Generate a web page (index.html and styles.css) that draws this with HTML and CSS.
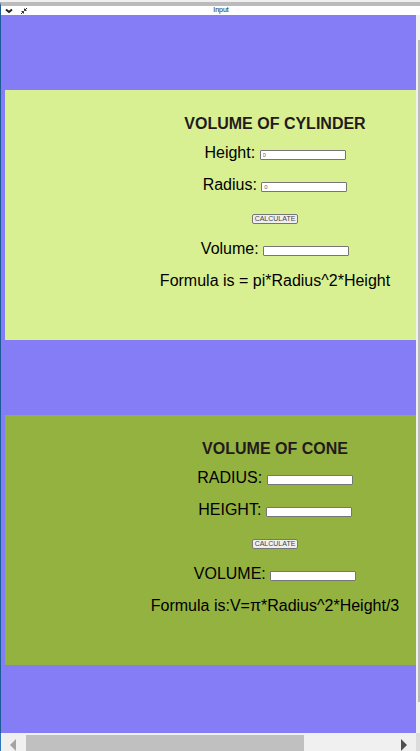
FILE: index.html
```html
<!DOCTYPE html>
<html lang="en">
<head>
<meta charset="utf-8">
<title>Input</title>
<link rel="stylesheet" href="styles.css">
</head>
<body>
<header class="titlebar">
  <svg class="icon" viewBox="0 0 8 8" aria-hidden="true"><path d="M1 2.5 L4 5 L7 2.5" fill="none" stroke="#222" stroke-width="2"/></svg>
  <svg class="icon" viewBox="0 0 8 8" aria-hidden="true"><path d="M1 7 L3.5 4.5 M4.5 3.5 L7 1 M1.5 4.5 H3.5 V6.5 M4.5 1.5 V3.5 H6.5" fill="none" stroke="#333" stroke-width="1"/></svg>
  <span class="name">Input</span>
</header>
<div class="view">
  <main class="stage">
    <form class="card cylinder">
      <h1>VOLUME OF CYLINDER</h1>
      <div class="row"><label for="cyl-height">Height:</label> <input id="cyl-height" type="text" value="0"></div>
      <div class="row"><label for="cyl-radius">Radius:</label> <input id="cyl-radius" type="text" value="0"></div>
      <div class="row"><button type="button">CALCULATE</button></div>
      <div class="row"><label for="cyl-volume">Volume:</label> <input id="cyl-volume" type="text"></div>
      <p class="row">Formula is = pi*Radius^2*Height</p>
    </form>
    <form class="card cone">
      <h1>VOLUME OF CONE</h1>
      <div class="row"><label for="cone-radius">RADIUS:</label> <input id="cone-radius" type="text"></div>
      <div class="row"><label for="cone-height">HEIGHT:</label> <input id="cone-height" type="text"></div>
      <div class="row"><button type="button">CALCULATE</button></div>
      <div class="row"><label for="cone-volume">VOLUME:</label> <input id="cone-volume" type="text"></div>
      <p class="row">Formula is:V=π*Radius^2*Height/3</p>
    </form>
  </main>
  <div class="vscroll"><div class="vthumb"></div></div>
</div>
<footer class="hscroll">
  <svg class="arrow" viewBox="0 0 6 12" aria-hidden="true"><path d="M6 0 V12 L0 6 Z" fill="#a3a3a3"/></svg>
  <div class="track"><div class="hthumb"></div></div>
  <svg class="arrow" viewBox="0 0 6 12" aria-hidden="true"><path d="M0 0 V12 L6 6 Z" fill="#505050"/></svg>
  <div class="corner"></div>
</footer>
</body>
</html>
```
FILE: styles.css
```css
* {
  box-sizing: border-box;
}

body {
  margin: 0;
  min-height: 100vh;
  display: flex;
  flex-direction: column;
  border-top: 2px solid #f0f0f0;
  background: #857df5;
  color: #000;
  font: 16px/32px "Liberation Sans", Arial, sans-serif;
}

.titlebar {
  position: relative;
  display: flex;
  align-items: center;
  gap: 7px;
  height: 13px;
  padding-left: 4px;
  border-top: 4px solid #bbb;
  border-left: 1px solid #1c5a96;
  background: #fff;
}

.icon {
  width: 8px;
  height: 8px;
}

.name {
  position: absolute;
  inset: 0;
  text-align: center;
  padding-left: 21px;
  color: #123;
  font-size: 7px;
  line-height: 8px;
}

.view {
  flex: 1;
  display: flex;
  border-left: 1px solid #1c5a96;
}

.stage {
  flex: 1;
  padding: 75px 0 68px 4px;
  display: flex;
  flex-direction: column;
  gap: 75px;
}

.card {
  height: 250px;
  padding: 21px 0 0 129px;
  text-align: center;
  white-space: nowrap;
}

.cylinder {
  background: #d9f092;
}

.cone {
  background: #94b23f;
}

h1 {
  margin: 0;
  color: #231a1c;
  font-size: 16px;
  line-height: 26px;
}

.row {
  height: 32px;
  margin: 0;
}

input,
button {
  height: 10px;
  border: 1px solid #767676;
  border-radius: 1px;
  vertical-align: 1px;
}

input {
  width: 86px;
  padding: 0 2px;
  background: #fff;
  color: #666;
  font: 6px/8px "Liberation Sans", Arial, sans-serif;
}

button {
  width: 46px;
  padding: 0;
  border-radius: 2px;
  background: #efefef;
  color: #444;
  font: 7px/8px "Liberation Sans", Arial, sans-serif;
}

.vscroll {
  width: 4px;
  padding: 25px 0 31px 2px;
  display: flex;
  background: #f0f0f0;
}

.vthumb {
  flex: 1;
  background: #bbb;
}

.hscroll {
  display: flex;
  height: 18px;
  padding-left: 9px;
  border-left: 1px solid #2f77bd;
  background: #f0f0f0;
}

.arrow {
  width: 6px;
  height: 12px;
  margin-top: 6px;
}

.track {
  flex: 1;
  padding: 2px 0 0 10px;
}

.hthumb {
  width: 74%;
  height: 16px;
  background: #c0c0c0;
}

.corner {
  width: 4px;
  margin-left: 9px;
  background: #dcdcdc;
}
```
